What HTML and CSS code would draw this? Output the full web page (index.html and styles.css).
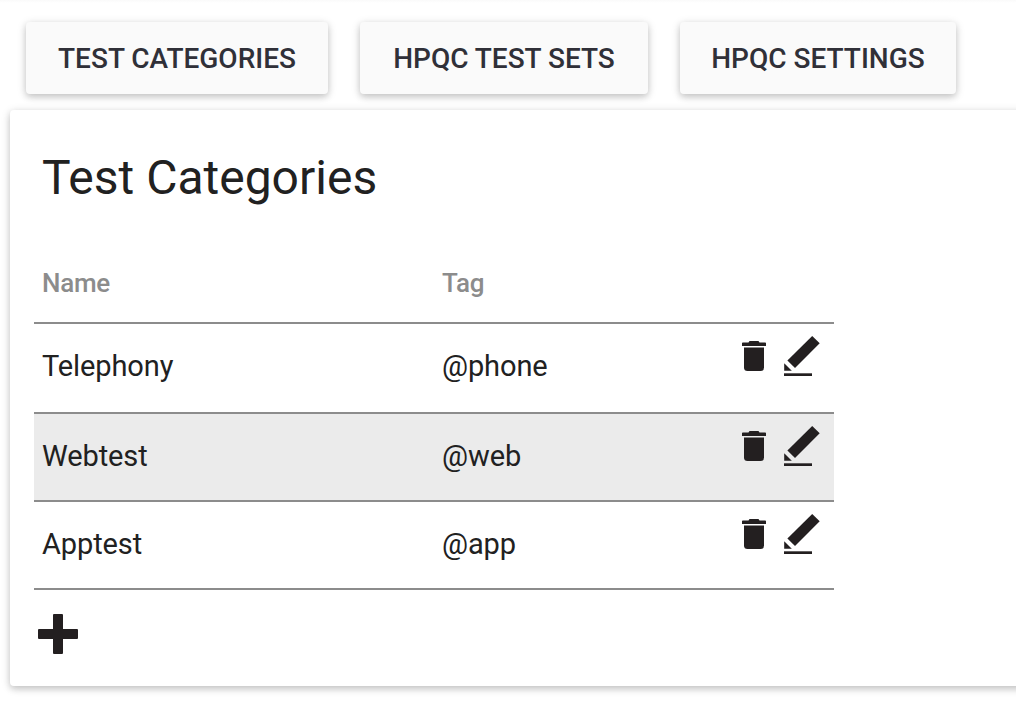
FILE: index.html
```html
<!DOCTYPE html>
<html lang="en">
<head>
<meta charset="utf-8">
<title>Test Categories</title>
<link rel="stylesheet" href="styles.css">
</head>
<body>
<svg class="sprite" aria-hidden="true">
  <symbol id="trash" viewBox="0 0 24 30">
    <path d="M0 2.2Q0 1.4 .8 1.4H6.5L7.5 0H16.5L17.5 1.4H23.2Q24 1.4 24 2.2V5H0Z"/>
    <path d="M2 6.4H22V26.5Q22 30 18.5 30H5.500Q2 30 2 26.500Z"/>
  </symbol>
  <symbol id="edit" viewBox="0 0 36 40">
    <path d="M28.200 0L35.700 7.300L11 32L3.400 24.600Z"/>
    <path d="M0.200 27.300L7.800 34.700H0.200Z"/>
    <path d="M0 37.300H28V40H0Z"/>
  </symbol>
</svg>
<nav class="tabs">
  <button class="tab tab-categories">TEST CATEGORIES</button>
  <button class="tab tab-sets">HPQC TEST SETS</button>
  <button class="tab tab-settings">HPQC SETTINGS</button>
</nav>
<main class="card">
  <h1 class="title">Test Categories</h1>
  <div class="table">
    <div class="row head"><span class="cell">Name</span><span class="cell">Tag</span></div>
    <div class="row first"><span class="cell">Telephony</span><span class="cell">@phone</span>
      <span class="actions"><svg class="trash"><use href="#trash"/></svg><svg class="edit"><use href="#edit"/></svg></span></div>
    <div class="row active"><span class="cell">Webtest</span><span class="cell">@web</span>
      <span class="actions"><svg class="trash"><use href="#trash"/></svg><svg class="edit"><use href="#edit"/></svg></span></div>
    <div class="row"><span class="cell">Apptest</span><span class="cell">@app</span>
      <span class="actions"><svg class="trash"><use href="#trash"/></svg><svg class="edit"><use href="#edit"/></svg></span></div>
  </div>
  <svg class="add" viewBox="0 0 40 40"><path d="M16 0H24Q25 0 25 1V15H39Q40 15 40 16V24Q40 25 39 25H25V39Q25 40 24 40H16Q15 40 15 39V25H1Q0 25 0 24V16Q0 15 1 15H15V1Q15 0 16 0Z"/></svg>
</main>
</body>
</html>
```
FILE: styles.css
```css
* { box-sizing: border-box; }
body {
  margin: 0;
  height: 706px;
  overflow: hidden;
  background: linear-gradient(#fafafa, #fff 3px);
  font-family: Roboto, sans-serif;
  color: #212121;
}
.sprite { display: none; }
.tabs {
  display: flex;
  gap: 32px;
  padding: 22px 26px 16px;
}
.tab {
  height: 72px;
  padding: 2px 0 0;
  border: 0;
  border-radius: 4px;
  background: #fafafa;
  color: #303038;
  font: 500 28px/70px Roboto, sans-serif;
  white-space: nowrap;
  box-shadow: 0 2px 10px rgba(0, 0, 0, .16), 0 3px 6px rgba(0, 0, 0, .12);
}
.tab-categories { width: 302px; }
.tab-sets { width: 288px; }
.tab-settings { width: 276px; }
.card {
  width: 1030px;
  height: 576px;
  margin-left: 10px;
  padding: 33px 24px 31px;
  border-radius: 4px;
  background: #fff;
  box-shadow: 0 2px 10px rgba(0, 0, 0, .16), 0 3px 6px rgba(0, 0, 0, .12);
}
.title {
  margin: 0 0 31px;
  padding-left: 8px;
  font-weight: 400;
  font-size: 48px;
  line-height: 70px;
}
.table { width: 800px; }
.row {
  display: flex;
  height: 88px;
  border-bottom: 2px solid #8c8c8c;
}
.cell {
  width: 400px;
  padding-left: 8px;
  font-size: 29px;
  letter-spacing: -.1px;
  line-height: 84px;
  white-space: nowrap;
}
.row .cell + .cell { width: 308px; }
.head { height: 80px; }
.head .cell {
  color: #8c8c8c;
  font-size: 26px;
  font-weight: 500;
  letter-spacing: -.25px;
  line-height: 78px;
}
.first { height: 90px; }
.active { background: #ebebeb; }
.actions {
  display: flex;
  align-items: flex-start;
  gap: 18px;
  padding-top: 12px;
  fill: #231f20;
}
.trash { width: 24px; height: 30px; margin-top: 5px; }
.edit { width: 36px; height: 40px; }
.add {
  display: block;
  width: 40px;
  height: 40px;
  margin: 24px 0 0 4px;
  fill: #231f20;
}
```
